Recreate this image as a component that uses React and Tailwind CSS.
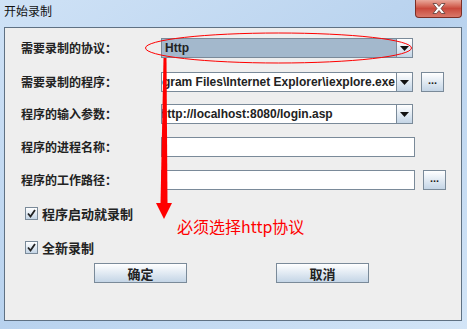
import React from "react";

const cjk = { fontFamily: '"Noto Sans CJK SC", "Liberation Sans", sans-serif' };
const latin = { fontFamily: '"Liberation Sans", "Noto Sans CJK SC", sans-serif' };

const ArrowBtn = () => (
  <div className="w-[16px] h-full border-l border-[#7a8a99] bg-gradient-to-b from-[#ffffff] to-[#c4d5e6] flex items-center justify-center">
    <svg width="9" height="5" viewBox="0 0 9 5">
      <polygon points="0,0 9,0 4.5,5" fill="#111" />
    </svg>
  </div>
);

const DotsBtn = () => (
  <div className="ml-[8px] w-[23px] h-[20px] border border-[#7a8a99] bg-gradient-to-b from-[#ffffff] to-[#c4d5e6] flex items-center justify-center">
    <span className="text-[11px] font-bold leading-none text-[#222] -mt-[3px]" style={latin}>...</span>
  </div>
);

const Row = ({ label, children, className = "" }) => (
  <div className={`flex items-center h-[20px] ${className}`}>
    <div className="w-[140px] text-[12px] font-bold text-[#222] leading-none" style={cjk}>
      {label}
    </div>
    {children}
  </div>
);

const Check = ({ label, className = "" }) => (
  <div className={`flex items-center h-[20px] pl-[4px] ${className}`}>
    <div className="w-[13px] h-[13px] border border-[#7a8a99] bg-gradient-to-b from-[#ffffff] to-[#c4d5e6] flex items-center justify-center">
      <svg width="9" height="9" viewBox="0 0 9 9">
        <path d="M1 4.5 L3.5 7.5 L8 1" stroke="#222" strokeWidth="1.8" fill="none" />
      </svg>
    </div>
    <span className="ml-[4px] text-[13px] font-bold text-[#222] leading-none" style={cjk}>
      {label}
    </span>
  </div>
);

const Btn = ({ children }) => (
  <div className="w-[93px] h-[20px] border border-[#7a8a99] bg-gradient-to-b from-[#ffffff] to-[#c4d5e6] flex items-center justify-center">
    <span className="text-[13px] font-bold text-[#222] leading-none" style={cjk}>{children}</span>
  </div>
);

export default function App() {
  return (
    <div className="relative w-[467px] h-[329px] overflow-hidden bg-gradient-to-br from-[#cfe2f6] via-[#b8d2ee] to-[#d3e5f7]">
      {/* title bar */}
      <div className="flex items-start justify-between h-[27px]">
        <div className="pl-[4px] pt-[5px] text-[12px] leading-none text-[#111]" style={cjk}>
          开始录制
        </div>
        <div className="mr-[5px] w-[47px] h-[18px] rounded-b-[4px] border border-t-0 border-[#7b2e25] bg-gradient-to-b from-[#e9a89b] via-[#c9493c] to-[#d9786a] flex items-center justify-center">
          <svg width="14" height="11" viewBox="0 0 14 11">
            <path
              d="M1 0.5 L4.5 0.5 L7 3.5 L9.5 0.5 L13 0.5 L9 5.5 L13 10.5 L9.5 10.5 L7 7.5 L4.5 10.5 L1 10.5 L5 5.5 Z"
              fill="#ffffff"
              stroke="#5a3a36"
              strokeWidth="0.8"
            />
          </svg>
        </div>
      </div>

      {/* content */}
      <div className="ml-[4px] w-[458px] h-[294px] border border-[#5f7183] bg-[#eeeeee] flex flex-col pl-[16px] pt-[10px]">
        <Row label="需要录制的协议：">
          <div className="w-[252px] h-[20px] border border-[#7a8a99] bg-[#a3b8cc] flex">
            <div className="flex-1 flex items-center pl-[3px] text-[12px] font-bold text-[#222]" style={latin}>
              Http
            </div>
            <ArrowBtn />
          </div>
        </Row>

        <Row label="需要录制的程序：" className="mt-[14px]">
          <div className="w-[252px] h-[20px] border border-[#7a8a99] bg-white flex">
            <div className="flex-1 overflow-hidden flex items-center justify-end pr-[1px] whitespace-nowrap text-[12px] font-bold text-[#222]" style={latin}>
              C:\Program Files\Internet Explorer\iexplore.exe
            </div>
            <ArrowBtn />
          </div>
          <DotsBtn />
        </Row>

        <Row label="程序的输入参数：" className="mt-[12px]">
          <div className="w-[252px] h-[20px] border border-[#7a8a99] bg-white flex">
            <div className="flex-1 overflow-hidden flex items-center whitespace-nowrap text-[12px] font-bold text-[#222]" style={latin}>
              <span className="-ml-[2px]">http://localhost:8080/login.asp</span>
            </div>
            <ArrowBtn />
          </div>
        </Row>

        <Row label="程序的进程名称：" className="mt-[13px]">
          <div className="w-[254px] h-[20px] border border-[#7a8a99] bg-white" />
        </Row>

        <Row label="程序的工作路径：" className="mt-[13px]">
          <div className="w-[254px] h-[20px] border border-[#7a8a99] bg-white" />
          <DotsBtn />
        </Row>

        <Check label="程序启动就录制" className="mt-[13px]" />
        <Check label="全新录制" className="mt-[14px]" />

        <div className="flex mt-[6px] pl-[73px] gap-[89px]">
          <Btn>确定</Btn>
          <Btn>取消</Btn>
        </div>
      </div>

      {/* red annotations drawn over the dialog */}
      <svg className="absolute left-0 top-0 pointer-events-none" width="467" height="329" viewBox="0 0 467 329">
        <ellipse cx="278.5" cy="48" rx="133" ry="15" fill="none" stroke="#ff0000" strokeWidth="1" />
        <polygon points="163.5,58 166.5,58 167.5,204 160.5,204" fill="#ff0000" />
        <polygon points="156,203 172,203 164,219" fill="#ff0000" />
      </svg>
      <div className="absolute left-[177px] top-[218px] text-[16px] leading-none text-[#ff0000]" style={cjk}>
        必须选择http协议
      </div>
    </div>
  );
}
